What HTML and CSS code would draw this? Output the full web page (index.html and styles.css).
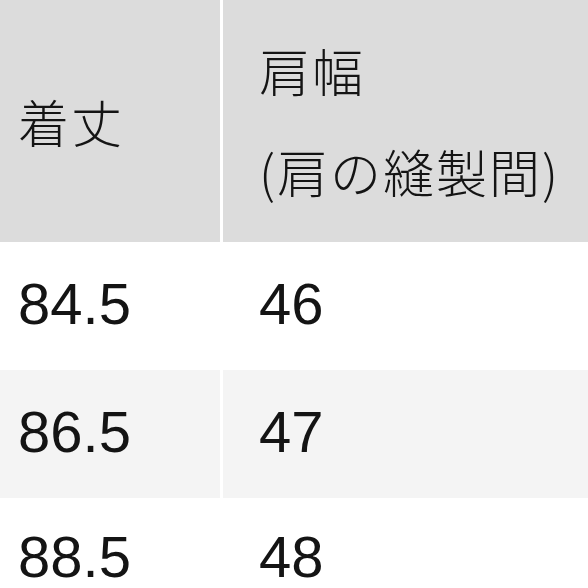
FILE: index.html
```html
<!DOCTYPE html>
<html lang="ja">
<head>
<meta charset="utf-8">
<link rel="stylesheet" href="styles.css">
</head>
<body>
<div class="table">
  <div class="cell head first"><span class="jp">着丈</span></div>
  <div class="cell head second"><span class="jp">肩幅<br>(肩の縫製間)</span></div>
  <div class="cell row first"><span class="num">84.5</span></div>
  <div class="cell row second"><span class="num">46</span></div>
  <div class="cell row alt first"><span class="num">86.5</span></div>
  <div class="cell row alt second"><span class="num">47</span></div>
  <div class="cell row last first"><span class="num">88.5</span></div>
  <div class="cell row last second"><span class="num">48</span></div>
</div>
</body>
</html>
```
FILE: styles.css
```css
html, body {
  margin: 0;
  padding: 0;
  background: #ffffff;
}
body {
  width: 588px;
  height: 588px;
  overflow: hidden;
  color: #141414;
  font-family: "Liberation Sans", Arial, "Noto Sans CJK JP", sans-serif;
}
.table {
  display: grid;
  grid-template-columns: 220px 1fr;
  grid-template-rows: 242px 128px 128px 90px;
  column-gap: 3px;
  background: #ffffff;
}
.cell {
  display: flex;
  background: #ffffff;
}
.cell.head {
  align-items: center;
  background: #dcdcdc;
}
.cell.row {
  align-items: flex-start;
  padding-top: 36px;
}
.cell.row.last {
  padding-top: 33px;
}
.cell.alt {
  background: #f4f4f4;
}
.cell.first {
  padding-left: 18px;
}
.cell.second {
  padding-left: 36px;
}
.jp {
  font-family: "Noto Sans CJK JP", sans-serif;
  font-size: 51px;
  font-weight: 300;
  line-height: 101px;
  letter-spacing: 2px;
}
.num {
  font-size: 58px;
  line-height: 52px;
}
```
